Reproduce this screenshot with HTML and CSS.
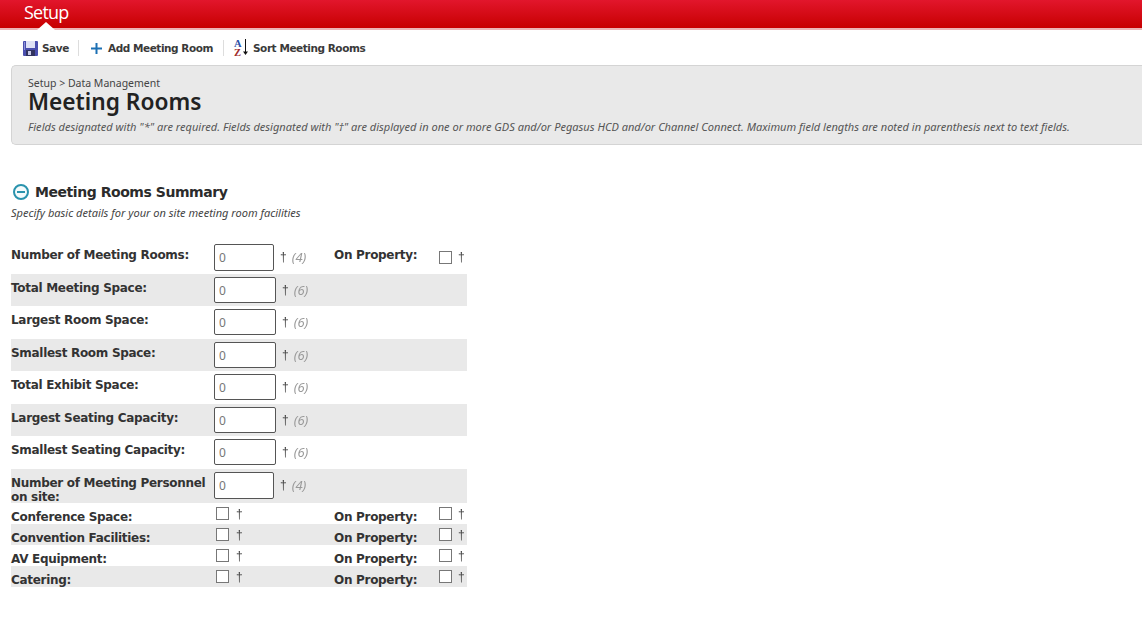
FILE: index.html
```html
<!DOCTYPE html>
<html lang="en">
<head>
<meta charset="utf-8">
<title>Meeting Rooms</title>
<link rel="stylesheet" href="styles.css">
</head>
<body>
<header class="topbar">
  <span class="topbar-title">Setup</span>
  <span class="topbar-notch"></span>
</header>
<nav class="toolbar">
  <a class="tool tool-save">
    <svg class="icon" width="15" height="15" viewBox="0 0 15 15"><rect x="0" y="0" width="15" height="15" rx="1" fill="#4a4fae"/><rect x="3" y="0" width="9" height="7" fill="#dfe2f6"/><rect x="1" y="1" width="1" height="8" fill="#8d92d8"/><rect x="3" y="9" width="9" height="6" fill="#31335f"/><rect x="5" y="10" width="3" height="4" fill="#c6c8e6"/></svg>
    Save
  </a>
  <a class="tool tool-add">
    <svg class="icon" width="13" height="13" viewBox="0 0 13 13"><path d="M5.500 1h2v4.500H12v2H7.500V12h-2V7.500H1v-2h4.500z" fill="#1c70b4"/></svg>
    Add Meeting Room
  </a>
  <a class="tool tool-sort">
    <svg class="icon" width="16" height="18" viewBox="0 0 16 18"><text x="0" y="8" class="az az-a">A</text><text x="0" y="17" class="az az-z">Z</text><path d="M11.500 0v14" stroke="#111" stroke-width="1"/><path d="M9 12.500h5l-2.500 3.500z" fill="#111"/></svg>
    Sort Meeting Rooms
  </a>
</nav>
<section class="banner">
  <div class="crumb">Setup &gt; Data Management</div>
  <h1 class="page-title">Meeting Rooms</h1>
  <p class="note">Fields designated with "*" are required. Fields designated with "†" are displayed in one or more GDS and/or Pegasus HCD and/or Channel Connect. Maximum field lengths are noted in parenthesis next to text fields.</p>
</section>
<section class="summary">
  <h2 class="summary-title">
    <svg width="18" height="18" viewBox="0 0 18 18"><circle cx="9" cy="9" r="7" fill="#f4fbfc" stroke="#2a93ad" stroke-width="2"/><rect x="5" y="8" width="8" height="2" fill="#2a93ad"/></svg>
    Meeting Rooms Summary
  </h2>
  <p class="summary-sub">Specify basic details for your on site meeting room facilities</p>
  <div class="form">
    <div class="row row-a"><span class="label">Number of Meeting Rooms:</span><span class="val"><input class="num num-s" value="0"><span class="dag">†</span><em class="max">(4)</em></span><span class="label label-b">On Property:</span><span class="val val-c"><input type="checkbox" class="chk"><span class="dag">†</span></span></div>
    <div class="row row-b shade"><span class="label">Total Meeting Space:</span><span class="val"><input class="num" value="0"><span class="dag">†</span><em class="max">(6)</em></span></div>
    <div class="row row-c"><span class="label">Largest Room Space:</span><span class="val"><input class="num" value="0"><span class="dag">†</span><em class="max">(6)</em></span></div>
    <div class="row row-b shade"><span class="label">Smallest Room Space:</span><span class="val"><input class="num" value="0"><span class="dag">†</span><em class="max">(6)</em></span></div>
    <div class="row row-c"><span class="label">Total Exhibit Space:</span><span class="val"><input class="num" value="0"><span class="dag">†</span><em class="max">(6)</em></span></div>
    <div class="row row-b shade"><span class="label">Largest Seating Capacity:</span><span class="val"><input class="num" value="0"><span class="dag">†</span><em class="max">(6)</em></span></div>
    <div class="row row-c"><span class="label">Smallest Seating Capacity:</span><span class="val"><input class="num" value="0"><span class="dag">†</span><em class="max">(6)</em></span></div>
    <div class="row row-d shade"><span class="label label-wrap">Number of Meeting Personnel on site:</span><span class="val"><input class="num num-s" value="0"><span class="dag">†</span><em class="max">(4)</em></span></div>
    <div class="row row-e"><span class="label">Conference Space:</span><span class="val"><input type="checkbox" class="chk chk-l"><span class="dag dag-c">†</span></span><span class="label label-b">On Property:</span><span class="val val-c"><input type="checkbox" class="chk"><span class="dag">†</span></span></div>
    <div class="row row-e shade"><span class="label">Convention Facilities:</span><span class="val"><input type="checkbox" class="chk chk-l"><span class="dag dag-c">†</span></span><span class="label label-b">On Property:</span><span class="val val-c"><input type="checkbox" class="chk"><span class="dag">†</span></span></div>
    <div class="row row-e"><span class="label">AV Equipment:</span><span class="val"><input type="checkbox" class="chk chk-l"><span class="dag dag-c">†</span></span><span class="label label-b">On Property:</span><span class="val val-c"><input type="checkbox" class="chk"><span class="dag">†</span></span></div>
    <div class="row row-e shade"><span class="label">Catering:</span><span class="val"><input type="checkbox" class="chk chk-l"><span class="dag dag-c">†</span></span><span class="label label-b">On Property:</span><span class="val val-c"><input type="checkbox" class="chk"><span class="dag">†</span></span></div>
  </div>
</section>
</body>
</html>
```
FILE: styles.css
```css
* { box-sizing: border-box; }
html, body { margin: 0; padding: 0; }
body {
  background: #fff;
  color: #2b2b2b;
  font-family: "DejaVu Sans", Verdana, sans-serif;
  font-size: 12px;
  overflow: hidden;
}
.topbar {
  position: relative;
  height: 30px;
  background: linear-gradient(#e2162c, #c70000);
  border-bottom: 2px solid #ecb5b5;
  padding-left: 24px;
}
.topbar-title {
  color: #fff;
  font-family: "Open Sans", sans-serif;
  font-size: 18px;
  line-height: 24px;
  letter-spacing: -0.8px;
}
.topbar-notch {
  position: absolute;
  left: 37px;
  bottom: -2px;
  width: 0;
  height: 0;
  border-left: 9px solid transparent;
  border-right: 9px solid transparent;
  border-bottom: 8px solid #fff;
}
.toolbar {
  display: flex;
  align-items: center;
  height: 35px;
  padding: 1px 0 0 23px;
}
.tool {
  display: flex;
  align-items: center;
  height: 16px;
  font-size: 10.5px;
  font-weight: bold;
  color: #3a3a3a;
  letter-spacing: -0.45px;
}
.tool-save { gap: 4px; width: 56px; border-right: 1px solid #ddd; }
.tool-add { gap: 5px; width: 145px; padding-left: 11px; border-right: 1px solid #ddd; }
.tool-sort { gap: 3px; padding-left: 10px; }
.icon { overflow: visible; }
.az { font-family: "Liberation Serif", serif; font-weight: bold; font-size: 10.5px; }
.az-a { fill: #2a4fa8; }
.az-z { fill: #a02c2c; }
.banner {
  margin-left: 11px;
  height: 80px;
  background: #e9e9e9;
  border: 1px solid #d4d4d4;
  border-right: 0;
  border-radius: 5px 0 0 5px;
  padding: 10px 16px 0;
}
.crumb { font-family: "Noto Sans", sans-serif; font-size: 10.5px; line-height: 14px; color: #444; }
.page-title {
  margin: 0;
  font-family: "Noto Sans", sans-serif;
  font-size: 22.700px;
  font-weight: 600;
  line-height: 23px;
  color: #222;
}
.note {
  margin: 7px 0 0;
  font-family: "Noto Sans", sans-serif;
  font-style: italic;
  font-size: 11.050px;
  line-height: 14px;
  color: #555;
  white-space: nowrap;
}
.summary { padding: 37px 0 0 12px; }
.summary-title {
  display: flex;
  align-items: center;
  gap: 5px;
  margin: 0;
  font-size: 14px;
  line-height: 20px;
  font-weight: bold;
  color: #2b2b2b;
  letter-spacing: -0.45px;
}
.summary-sub {
  margin: 4px 0 0 -1px;
  font-family: "Noto Sans", sans-serif;
  font-style: italic;
  font-size: 11.050px;
  line-height: 14px;
  color: #444;
}
.form { width: 456px; margin: 23px 0 0 -1px; }
.row {
  display: grid;
  grid-template-columns: 203px 120px 105px 28px;
  align-items: start;
}
.shade { background: #e9e9e9; }
.row-a { height: 31px; }
.row-b { height: 32px; }
.row-c { height: 33px; }
.row-d { height: 34px; }
.row-e { height: 21px; }
.label {
  font-size: 12px;
  font-weight: bold;
  line-height: 14px;
  color: #333;
  letter-spacing: -0.3px;
  padding-top: 7px;
}
.row-a .label { padding-top: 5px; }
.row-d .label { padding-top: 7px; }
.row-e .label { padding-top: 7px; }
.val { display: flex; align-items: center; height: 32px; }
.row-a .val { height: 28px; }
.row-e .val { height: 21px; }
.num {
  width: 62px;
  height: 26px;
  margin: 0;
  padding: 0 4px;
  border: 1px solid #555;
  border-radius: 2px;
  background: #fff;
  font-family: "Noto Sans", sans-serif;
  font-size: 12px;
  color: #777;
}
.num-s { width: 60px; height: 27px; }
.chk {
  appearance: none;
  width: 13px;
  height: 13px;
  margin: 0;
  border: 1px solid #777;
  background: #fff;
}
.chk-l { margin-left: 2px; }
.dag {
  margin: 0 0 0 6px;
  font-family: "Liberation Sans", sans-serif;
  font-size: 12px;
  color: #444;
  will-change: opacity;
}
.dag-c { margin-left: 7px; }
.max {
  margin: 0 0 0 5px;
  font-family: "Noto Sans", sans-serif;
  font-size: 13px;
  color: #999;
  will-change: opacity;
}
```
